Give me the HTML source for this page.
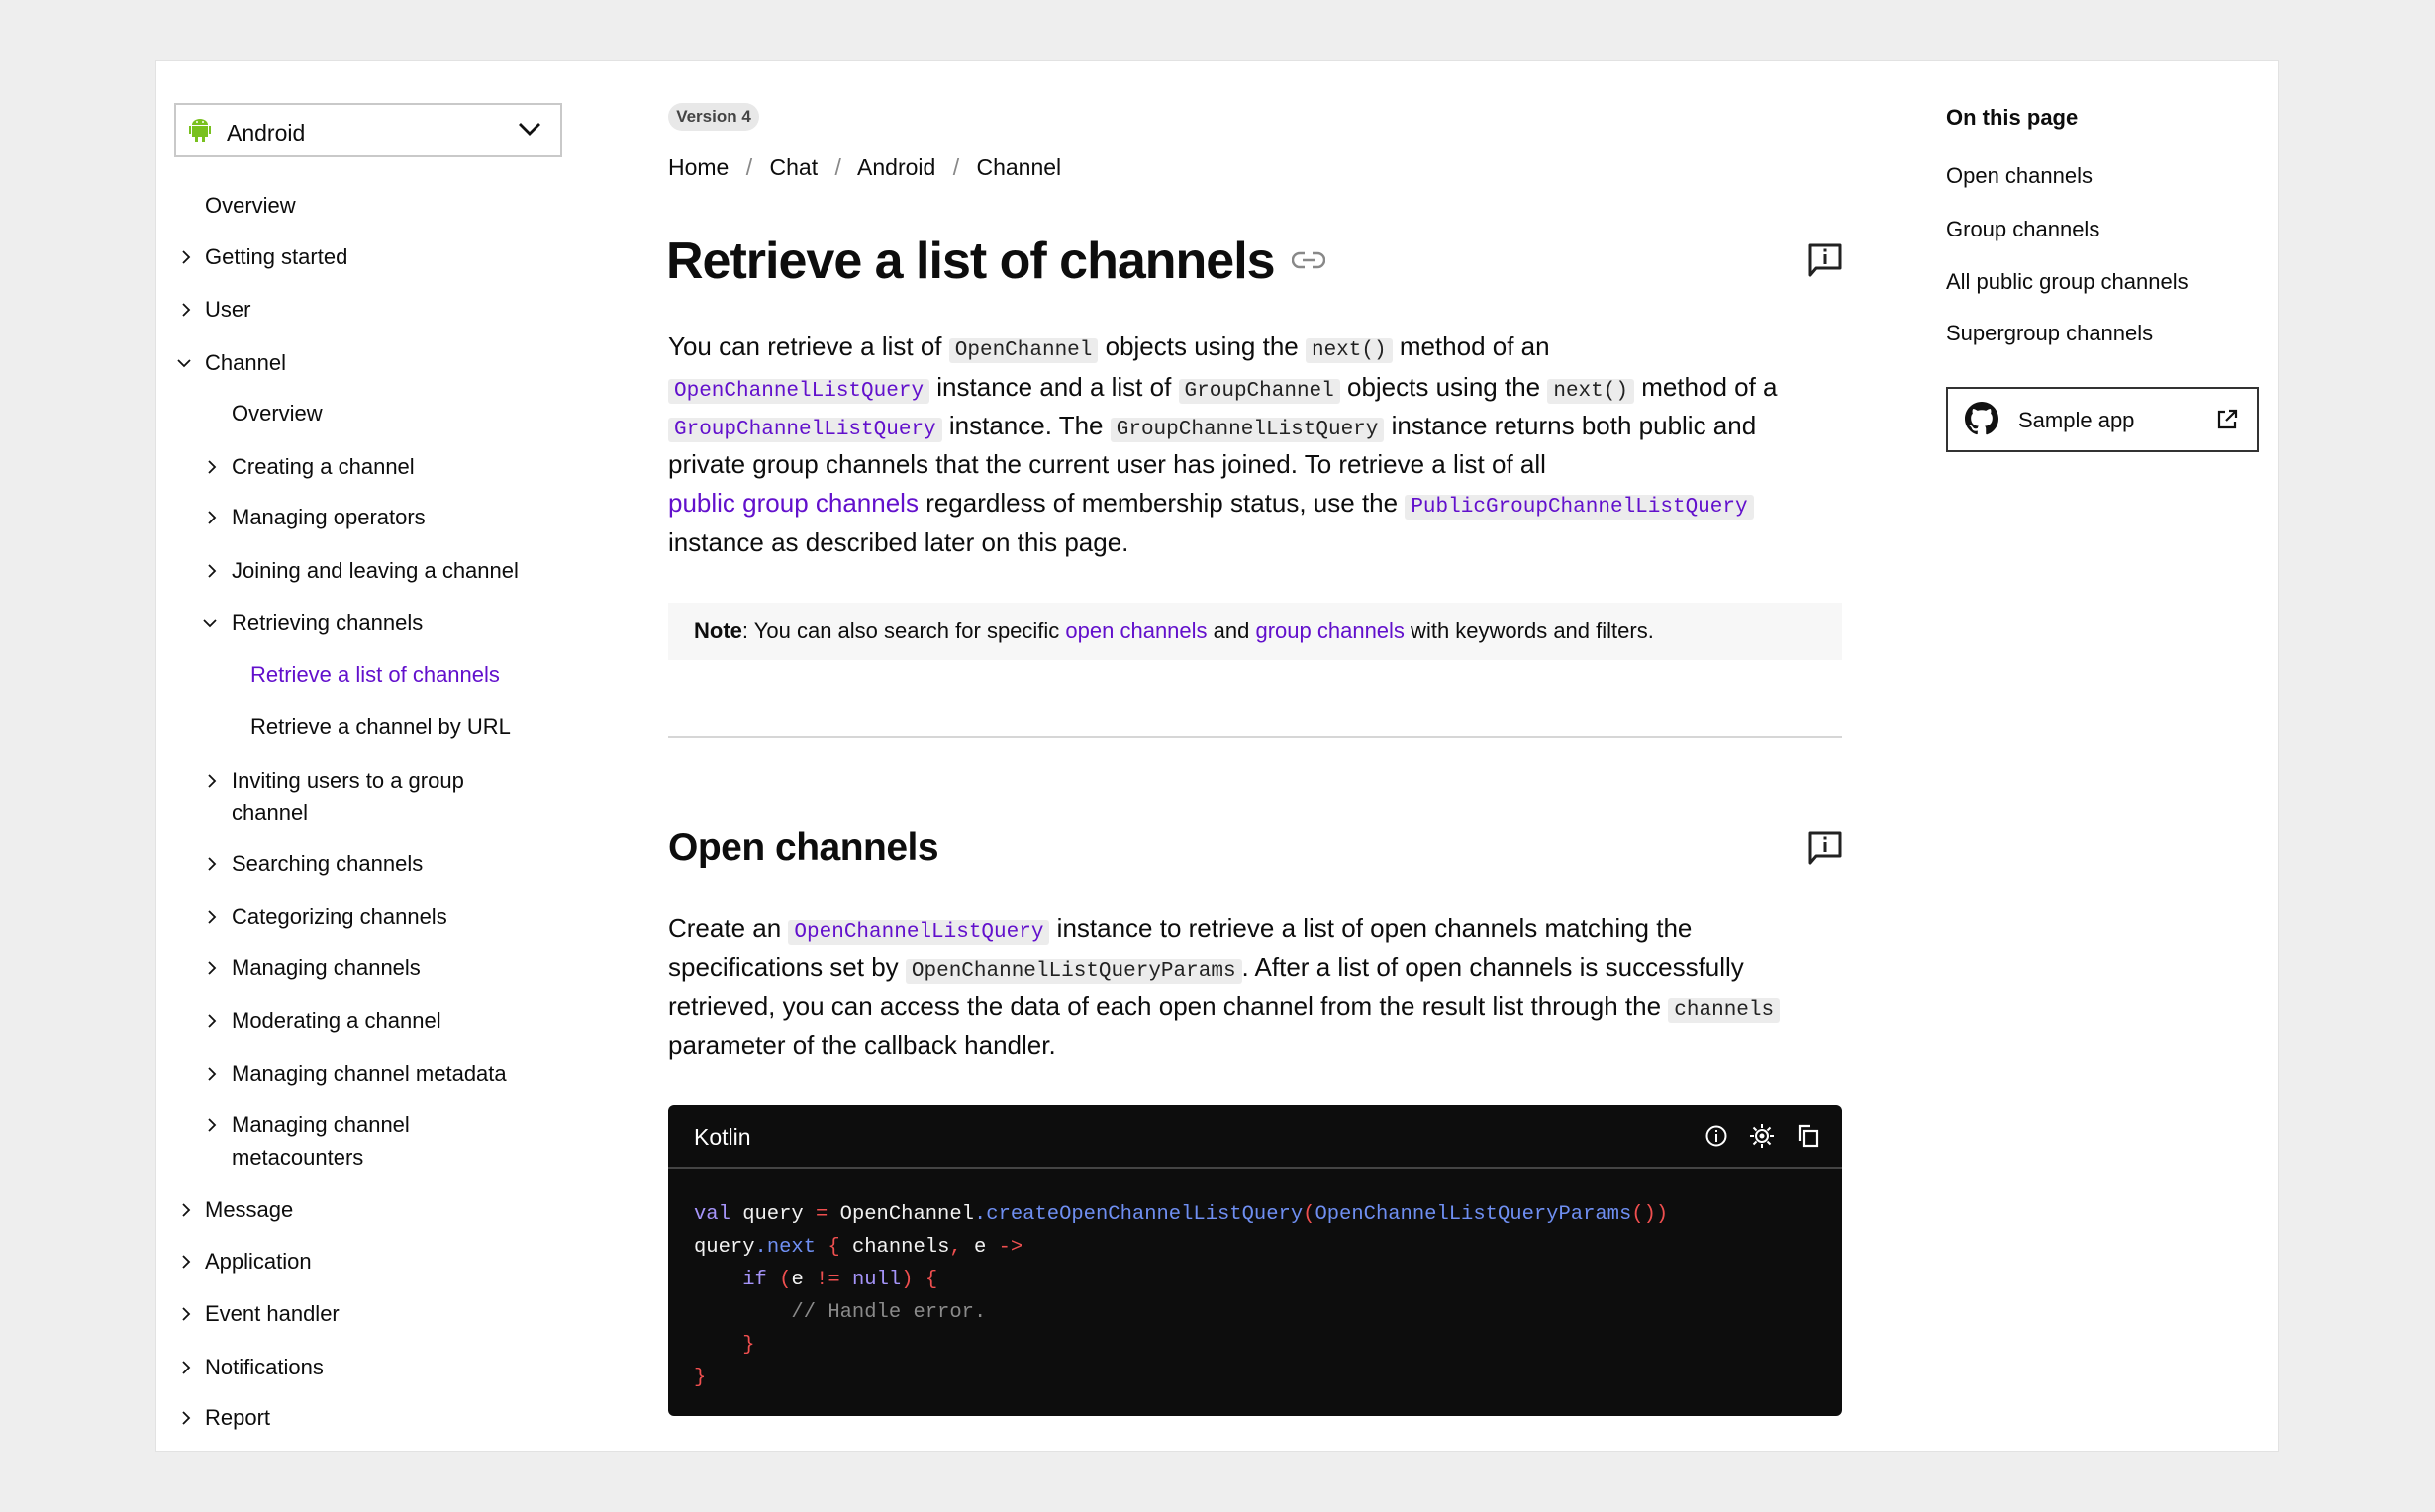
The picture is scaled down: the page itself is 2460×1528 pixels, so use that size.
<!DOCTYPE html>
<html><head><meta charset="utf-8"><style>
*{margin:0;padding:0;box-sizing:border-box}
body{width:2460px;height:1528px;background:#eeeeee;font-family:"Liberation Sans",sans-serif;color:#0d0d0d;position:relative;overflow:hidden}
.card{position:absolute;left:157px;top:61px;width:2145px;height:1406px;background:#fff;border:1px solid #e2e2e2}
.a{position:absolute;white-space:nowrap}
.nav{font-size:22px;line-height:34px;height:34px}
.chev{position:absolute;width:14px;height:14px}
.p{font-size:26px;line-height:40px;height:40px;left:675px}
code{font-family:"Liberation Mono",monospace;font-size:21px;background:#ececec;border-radius:3px;padding:1px 6px;color:#222}
code.l{color:#6210cc}
.lk{color:#6210cc}
.cl{position:absolute;left:701px;font-family:"Liberation Mono",monospace;font-size:20.5px;line-height:33px;color:#f2f2f2;white-space:pre}
.k{color:#a594f9}.f{color:#6f8ff2}.r{color:#ef4f4f}.c{color:#8a8a8a}
.toc{font-size:22px;left:1966px;line-height:30px}
</style></head><body>
<div class="card"></div>

<div class="a" style="left:176px;top:104px;width:392px;height:55px;border:2px solid #c9c9c9;background:#fff"></div>
<svg class="a" style="left:191px;top:118px" width="22" height="26" viewBox="0 0 22 26"><rect x="3" y="9" width="16" height="11" fill="#79c11f"/><path d="M3 8a8 6 0 0 1 16 0z" fill="#79c11f"/><rect x="6" y="20" width="3" height="5" fill="#79c11f"/><rect x="13" y="20" width="3" height="5" fill="#79c11f"/><rect x="0" y="9" width="2" height="8" fill="#79c11f"/><rect x="20" y="9" width="2" height="8" fill="#79c11f"/><circle cx="8" cy="5" r="1" fill="#fff"/><circle cx="14" cy="5" r="1" fill="#fff"/></svg>
<div class="a nav" style="left:229px;top:117px;font-size:23px">Android</div>
<svg class="a" style="left:523px;top:122px" width="24" height="16" viewBox="0 0 24 16"><path d="M2 3l10 10 10-10" fill="none" stroke="#111" stroke-width="2.8"/></svg>

<div class="a nav" style="left:207px;top:191px">Overview</div>
<div class="a nav" style="left:207px;top:243px">Getting started</div>
<div class="a nav" style="left:207px;top:296px">User</div>
<div class="a nav" style="left:207px;top:350px">Channel</div>
<div class="a nav" style="left:234px;top:401px">Overview</div>
<div class="a nav" style="left:234px;top:455px">Creating a channel</div>
<div class="a nav" style="left:234px;top:506px">Managing operators</div>
<div class="a nav" style="left:234px;top:560px">Joining and leaving a channel</div>
<div class="a nav" style="left:234px;top:613px">Retrieving channels</div>
<div class="a nav" style="left:253px;top:665px;color:#6210cc">Retrieve a list of channels</div>
<div class="a nav" style="left:253px;top:718px">Retrieve a channel by URL</div>
<div class="a nav" style="left:234px;top:772px">Inviting users to a group</div>
<div class="a nav" style="left:234px;top:805px">channel</div>
<div class="a nav" style="left:234px;top:856px">Searching channels</div>
<div class="a nav" style="left:234px;top:910px">Categorizing channels</div>
<div class="a nav" style="left:234px;top:961px">Managing channels</div>
<div class="a nav" style="left:234px;top:1015px">Moderating a channel</div>
<div class="a nav" style="left:234px;top:1068px">Managing channel metadata</div>
<div class="a nav" style="left:234px;top:1120px">Managing channel</div>
<div class="a nav" style="left:234px;top:1153px">metacounters</div>
<div class="a nav" style="left:207px;top:1206px">Message</div>
<div class="a nav" style="left:207px;top:1258px">Application</div>
<div class="a nav" style="left:207px;top:1311px">Event handler</div>
<div class="a nav" style="left:207px;top:1365px">Notifications</div>
<div class="a nav" style="left:207px;top:1416px">Report</div>

<svg width="0" height="0" style="position:absolute"><defs>
<path id="cr" d="M4 1l6 6-6 6" fill="none" stroke="#111" stroke-width="1.8"/>
<path id="cd" d="M1 4l6 6 6-6" fill="none" stroke="#111" stroke-width="1.8"/></defs></svg>
<svg class="chev" style="left:181px;top:253px" viewBox="0 0 14 14"><use href="#cr"/></svg>
<svg class="chev" style="left:181px;top:306px" viewBox="0 0 14 14"><use href="#cr"/></svg>
<svg class="chev" style="left:179px;top:360px" viewBox="0 0 14 14"><use href="#cd"/></svg>
<svg class="chev" style="left:207px;top:465px" viewBox="0 0 14 14"><use href="#cr"/></svg>
<svg class="chev" style="left:207px;top:516px" viewBox="0 0 14 14"><use href="#cr"/></svg>
<svg class="chev" style="left:207px;top:570px" viewBox="0 0 14 14"><use href="#cr"/></svg>
<svg class="chev" style="left:205px;top:623px" viewBox="0 0 14 14"><use href="#cd"/></svg>
<svg class="chev" style="left:207px;top:782px" viewBox="0 0 14 14"><use href="#cr"/></svg>
<svg class="chev" style="left:207px;top:866px" viewBox="0 0 14 14"><use href="#cr"/></svg>
<svg class="chev" style="left:207px;top:920px" viewBox="0 0 14 14"><use href="#cr"/></svg>
<svg class="chev" style="left:207px;top:971px" viewBox="0 0 14 14"><use href="#cr"/></svg>
<svg class="chev" style="left:207px;top:1025px" viewBox="0 0 14 14"><use href="#cr"/></svg>
<svg class="chev" style="left:207px;top:1078px" viewBox="0 0 14 14"><use href="#cr"/></svg>
<svg class="chev" style="left:207px;top:1130px" viewBox="0 0 14 14"><use href="#cr"/></svg>
<svg class="chev" style="left:181px;top:1216px" viewBox="0 0 14 14"><use href="#cr"/></svg>
<svg class="chev" style="left:181px;top:1268px" viewBox="0 0 14 14"><use href="#cr"/></svg>
<svg class="chev" style="left:181px;top:1321px" viewBox="0 0 14 14"><use href="#cr"/></svg>
<svg class="chev" style="left:181px;top:1375px" viewBox="0 0 14 14"><use href="#cr"/></svg>
<svg class="chev" style="left:181px;top:1426px" viewBox="0 0 14 14"><use href="#cr"/></svg>

<div class="a" style="left:675px;top:104px;width:92px;height:28px;border-radius:14px;background:#e8e8e8;font-size:17px;line-height:28px;text-align:center;color:#444;font-weight:bold">Version 4</div>
<div class="a" style="left:675px;top:154px;font-size:23px;line-height:30px">Home <span style="color:#888;margin:0 11px">/</span> Chat <span style="color:#888;margin:0 11px">/</span> Android <span style="color:#888;margin:0 11px">/</span> Channel</div>
<div class="a" style="left:673px;top:231px;font-size:52px;line-height:66px;font-weight:bold;letter-spacing:-1px">Retrieve a list of channels</div>
<svg class="a" style="left:1305px;top:253px" width="34" height="20" viewBox="0 0 34 20"><path d="M13 3H8a7 7 0 0 0 0 14h5M21 3h5a7 7 0 0 1 0 14h-5M11 10h12" fill="none" stroke="#888" stroke-width="2.5"/></svg>
<svg class="a" style="left:1826px;top:245px" width="36" height="36" viewBox="0 0 36 36"><path d="M3 3h30v23H9l-6 7z" fill="none" stroke="#222" stroke-width="3" stroke-linejoin="round"/><rect x="16.5" y="12" width="3" height="10" fill="#222"/><rect x="16.5" y="6.5" width="3" height="3" fill="#222"/></svg>

<div class="a p" style="top:330px">You can retrieve a list of <code>OpenChannel</code> objects using the <code>next()</code> method of an</div>
<div class="a p" style="top:371px"><code class="l">OpenChannelListQuery</code> instance and a list of <code>GroupChannel</code> objects using the <code>next()</code> method of a</div>
<div class="a p" style="top:410px"><code class="l">GroupChannelListQuery</code> instance. The <code>GroupChannelListQuery</code> instance returns both public and</div>
<div class="a p" style="top:449px">private group channels that the current user has joined. To retrieve a list of all</div>
<div class="a p" style="top:488px"><span class="lk">public group channels</span> regardless of membership status, use the <code class="l">PublicGroupChannelListQuery</code></div>
<div class="a p" style="top:528px">instance as described later on this page.</div>

<div class="a" style="left:675px;top:609px;width:1186px;height:58px;background:#f7f7f7"></div>
<div class="a" style="left:701px;top:623px;font-size:22px;line-height:30px"><b>Note</b>: You can also search for specific <span class="lk">open channels</span> and <span class="lk">group channels</span> with keywords and filters.</div>

<div class="a" style="left:675px;top:744px;width:1186px;height:2px;background:#d6d6d6"></div>

<div class="a" style="left:675px;top:832px;font-size:39px;line-height:50px;font-weight:bold;letter-spacing:-0.5px">Open channels</div>
<svg class="a" style="left:1826px;top:839px" width="36" height="36" viewBox="0 0 36 36"><path d="M3 3h30v23H9l-6 7z" fill="none" stroke="#222" stroke-width="3" stroke-linejoin="round"/><rect x="16.5" y="12" width="3" height="10" fill="#222"/><rect x="16.5" y="6.5" width="3" height="3" fill="#222"/></svg>

<div class="a p" style="top:918px">Create an <code class="l">OpenChannelListQuery</code> instance to retrieve a list of open channels matching the</div>
<div class="a p" style="top:957px">specifications set by <code>OpenChannelListQueryParams</code>. After a list of open channels is successfully</div>
<div class="a p" style="top:997px">retrieved, you can access the data of each open channel from the result list through the <code>channels</code></div>
<div class="a p" style="top:1036px">parameter of the callback handler.</div>

<div class="a" style="left:675px;top:1117px;width:1186px;height:314px;background:#0d0d0d;border-radius:6px"></div>
<div class="a" style="left:675px;top:1179px;width:1186px;height:2px;background:#444"></div>
<div class="a" style="left:701px;top:1134px;font-size:23px;line-height:30px;color:#fff">Kotlin</div>
<svg class="a" style="left:1722px;top:1136px" width="24" height="24" viewBox="0 0 24 24"><circle cx="12" cy="12" r="9.5" fill="none" stroke="#fff" stroke-width="2"/><rect x="11" y="10" width="2" height="8" fill="#fff"/><rect x="11" y="6" width="2" height="2" fill="#fff"/></svg>
<svg class="a" style="left:1767px;top:1135px" width="26" height="26" viewBox="0 0 26 26"><circle cx="13" cy="13" r="6" fill="none" stroke="#fff" stroke-width="2"/><circle cx="13" cy="13" r="2.5" fill="#fff"/><path d="M13 1v4M13 21v4M1 13h4M21 13h4M4.5 4.5l3 3M18.5 18.5l3 3M4.5 21.5l3-3M18.5 7.5l3-3" stroke="#fff" stroke-width="2"/></svg>
<svg class="a" style="left:1815px;top:1135px" width="24" height="26" viewBox="0 0 24 26"><path d="M14 3H3v15" fill="none" stroke="#fff" stroke-width="2.2"/><rect x="8" y="8" width="13" height="15" fill="none" stroke="#fff" stroke-width="2.2"/></svg>

<div class="cl" style="top:1211px"><span class="k">val</span> query <span class="r">=</span> OpenChannel<span class="f">.createOpenChannelListQuery</span><span class="r">(</span><span class="f">OpenChannelListQueryParams</span><span class="r">())</span></div>
<div class="cl" style="top:1244px">query<span class="f">.next</span> <span class="r">{</span> channels<span class="r">,</span> e <span class="r">-&gt;</span></div>
<div class="cl" style="top:1277px">    <span class="k">if</span> <span class="r">(</span>e <span class="r">!=</span> <span class="k">null</span><span class="r">)</span> <span class="r">{</span></div>
<div class="cl" style="top:1310px">        <span class="c">// Handle error.</span></div>
<div class="cl" style="top:1343px">    <span class="r">}</span></div>
<div class="cl" style="top:1376px"><span class="r">}</span></div>

<div class="a toc" style="top:104px;font-weight:bold">On this page</div>
<div class="a toc" style="top:163px">Open channels</div>
<div class="a toc" style="top:217px">Group channels</div>
<div class="a toc" style="top:270px">All public group channels</div>
<div class="a toc" style="top:322px">Supergroup channels</div>
<div class="a" style="left:1966px;top:391px;width:316px;height:66px;border:2px solid #333"></div>
<svg class="a" style="left:1985px;top:406px" width="34" height="34" viewBox="0 0 16 16"><path fill="#111" d="M8 0C3.58 0 0 3.58 0 8c0 3.54 2.29 6.53 5.47 7.59.4.07.55-.17.55-.38v-1.33c-2.23.48-2.7-1.07-2.7-1.07-.36-.92-.89-1.17-.89-1.17-.73-.5.05-.49.05-.49.8.06 1.23.83 1.23.83.71 1.22 1.87.87 2.33.66.07-.52.28-.87.5-1.07-1.78-.2-3.64-.89-3.64-3.95 0-.87.31-1.59.82-2.15-.08-.2-.36-1.02.08-2.12 0 0 .67-.21 2.2.82a7.6 7.6 0 0 1 4 0c1.53-1.04 2.2-.82 2.2-.82.44 1.1.16 1.92.08 2.12.51.56.82 1.27.82 2.15 0 3.07-1.87 3.75-3.65 3.95.29.25.54.73.54 1.48v2.2c0 .21.15.46.55.38A8 8 0 0 0 16 8c0-4.42-3.58-8-8-8z"/></svg>
<div class="a" style="left:2039px;top:410px;font-size:22px;line-height:30px">Sample app</div>
<svg class="a" style="left:2239px;top:413px" width="22" height="22" viewBox="0 0 22 22"><path d="M9 3H3v16h16v-6M13 2h7v7M20 2L10 12" fill="none" stroke="#111" stroke-width="2.2"/></svg>
</body></html>
